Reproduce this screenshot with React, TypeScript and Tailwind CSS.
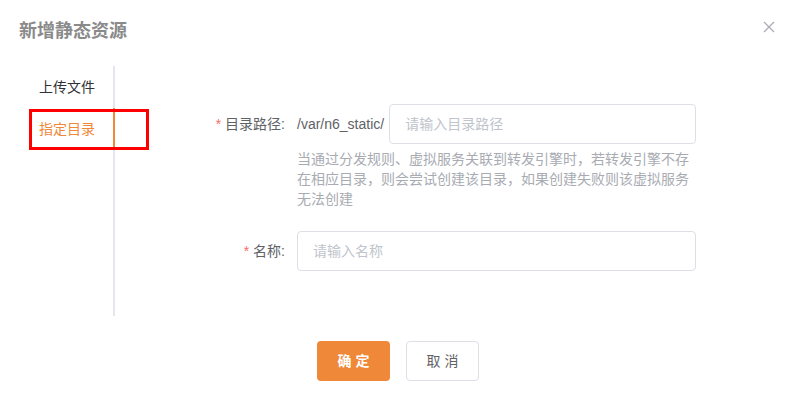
export default function App() {
  const font = { fontFamily: '"Liberation Sans", "Noto Sans CJK SC", sans-serif' };
  return (
    <div className="relative w-[794px] h-[397px] bg-white overflow-hidden" style={font}>
      {/* Header */}
      <div className="flex items-center justify-between h-[66px] pl-[19px] pr-[19px] pb-[4px]">
        <div className="text-[18px] font-bold text-[#8a8a8a] leading-none">新增静态资源</div>
        <svg width="12" height="12" viewBox="0 0 12 12" className="mb-[8px]">
          <path d="M1 1 L11 11 M11 1 L1 11" stroke="#a8abb2" strokeWidth="1.2" />
        </svg>
      </div>

      {/* Body */}
      <div className="flex">
        {/* Tabs */}
        <div className="w-[115px] h-[250px] border-r-2 border-[#e4e7ed] flex flex-col">
          <div className="h-[42px] leading-[42px] text-right pr-[18px] text-[14px] text-[#303133]">上传文件</div>
          <div className="relative h-[42px] leading-[42px] text-right pr-[18px] text-[14px] text-[#f0883a]">
            指定目录
            <div className="absolute right-[-2px] top-0 w-[2px] h-[42px] bg-[#f0883a]" />
          </div>
        </div>

        {/* Form */}
        <div className="pt-[38px] flex flex-col">
          <div className="flex">
            <div className="w-[182px] pr-[12px] h-[40px] flex items-center justify-end text-[14px] text-[#606266]">
              <span className="text-[#f56c6c] mr-[4px]">*</span>目录路径:
            </div>
            <div className="w-[399px]">
              <div className="flex items-center h-[40px]">
                <span className="text-[14px] text-[#606266] mr-[5px]">/var/n6_static/</span>
                <div className="flex-1 h-[40px] border border-[#dcdfe6] rounded-[4px] flex items-center px-[15px] text-[14px] text-[#c0c4cc]">
                  请输入目录路径
                </div>
              </div>
              <div className="mt-[5px] text-[14px] leading-[20px] text-[#a8abb2]">
                当通过分发规则、虚拟服务关联到转发引擎时，若转发引擎不存在相应目录，则会尝试创建该目录，如果创建失败则该虚拟服务无法创建
              </div>
            </div>
          </div>

          <div className="flex mt-[22px]">
            <div className="w-[182px] pr-[12px] h-[40px] flex items-center justify-end text-[14px] text-[#606266]">
              <span className="text-[#f56c6c] mr-[4px]">*</span>名称:
            </div>
            <div className="w-[399px] h-[40px] border border-[#dcdfe6] rounded-[4px] flex items-center px-[15px] text-[14px] text-[#c0c4cc]">
              请输入名称
            </div>
          </div>
        </div>
      </div>

      {/* Footer */}
      <div className="flex justify-center gap-[16px] mt-[25px] pl-[2px]">
        <button className="w-[73px] h-[40px] rounded-[4px] bg-[#f0883a] text-white text-[14px] font-bold tracking-[4px] pl-[4px]">
          确定
        </button>
        <button className="w-[73px] h-[40px] rounded-[4px] border border-[#dcdfe6] bg-white text-[#606266] text-[14px] tracking-[4px] pl-[4px]">
          取消
        </button>
      </div>

      {/* Annotation box */}
      <div className="absolute left-[29px] top-[109px] w-[120px] h-[41px] border-[3px] border-[#ff0000]" />
    </div>
  );
}
